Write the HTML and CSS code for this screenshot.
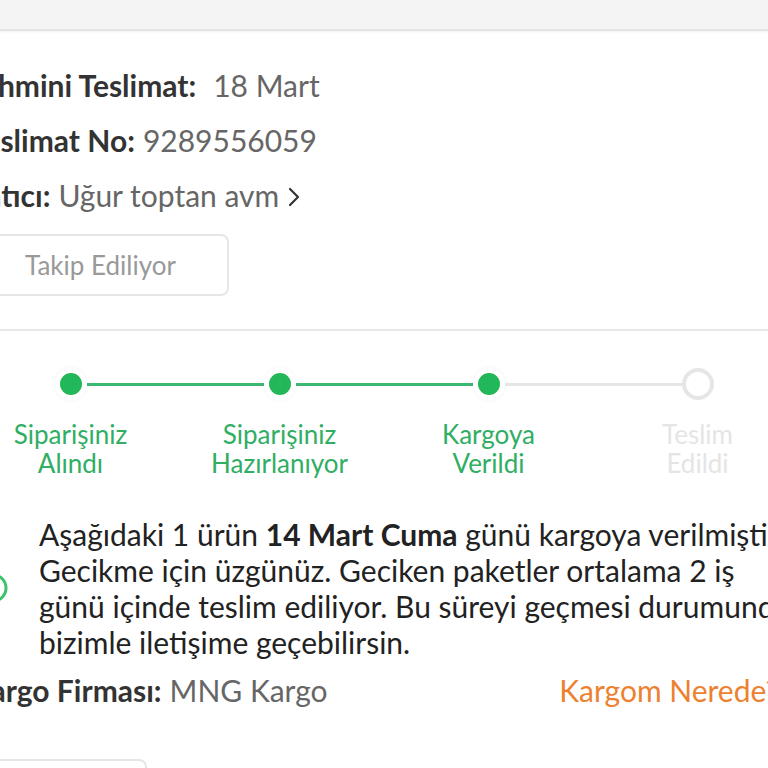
FILE: index.html
```html
<!DOCTYPE html>
<html lang="tr">
<head>
<meta charset="utf-8">
<title>Sipariş Takip</title>
<link rel="stylesheet" href="styles.css">
</head>
<body>
<div class="topbar"></div>
<main class="card">
  <section class="info">
    <div class="row row-first"><span class="label">Tahmini Teslimat:</span><span class="value value-wide">18 Mart</span></div>
    <div class="row"><span class="label">Teslimat No:</span> <span class="value">9289556059</span></div>
    <div class="row"><span class="label">Satıcı:</span> <span class="value">Uğur toptan avm</span><svg class="chev" width="12" height="20" viewBox="0 0 12 20"><path d="M2 2l8 8-8 8" fill="none" stroke="#333" stroke-width="2.2" stroke-linecap="round" stroke-linejoin="round"/></svg></div>
    <button class="track-btn">Takip Ediliyor</button>
  </section>
  <div class="divider"></div>
  <section class="stepper">
    <div class="step done">
      <div class="track"><span class="ln ln-none"></span><span class="dot"></span><span class="ln ln-green"></span></div>
      <div class="step-label">Siparişiniz<br>Alındı</div>
    </div>
    <div class="step done">
      <div class="track"><span class="ln ln-green"></span><span class="dot"></span><span class="ln ln-green"></span></div>
      <div class="step-label">Siparişiniz<br>Hazırlanıyor</div>
    </div>
    <div class="step done">
      <div class="track"><span class="ln ln-green"></span><span class="dot"></span><span class="ln ln-gray"></span></div>
      <div class="step-label">Kargoya<br>Verildi</div>
    </div>
    <div class="step todo">
      <div class="track"><span class="ln ln-gray"></span><span class="dot dot-empty"></span><span class="ln ln-none"></span></div>
      <div class="step-label">Teslim<br>Edildi</div>
    </div>
  </section>
  <section class="message">
    <svg class="msg-icon" width="30" height="30" viewBox="0 0 30 30"><circle cx="15" cy="15" r="13" fill="none" stroke="#3cc26b" stroke-width="3"/><path d="M15 8v7l5 3" fill="none" stroke="#3cc26b" stroke-width="3" stroke-linecap="round"/></svg>
    <p class="msg-text">Aşağıdaki 1 ürün <b>14 Mart Cuma</b> günü kargoya verilmiştir. Gecikme için üzgünüz. Geciken paketler ortalama 2 iş günü içinde teslim ediliyor. Bu süreyi geçmesi durumunda bizimle iletişime geçebilirsin.</p>
  </section>
  <div class="cargo-row">
    <div class="row"><span class="label">Kargo Firması:</span> <span class="value">MNG Kargo</span></div>
    <a class="where">Kargom Nerede?</a>
  </div>
  <div class="bottom-box"></div>
</main>
</body>
</html>
```

FILE: styles.css
```css
html, body {
  margin: 0;
  padding: 0;
  background: #fff;
  overflow: hidden;
}
body {
  font-family: Lato, "Noto Sans", sans-serif;
  color: #333;
}
.topbar {
  height: 29px;
  background: #f4f4f4;
  border-bottom: 2px solid #e4e4e4;
  box-shadow: 0 1px 2px rgba(0,0,0,0.06);
}
.card {
  margin-left: -34px;
  width: 836px;
}
.info {
  padding: 27px 0 0 4px;
}
.row {
  font-size: 30px;
  line-height: 55px;
  white-space: nowrap;
  display: flex;
  align-items: center;
}
.row .label {
  font-weight: 700;
  color: #333;
  margin-right: 8px;
}
.row .value {
  color: #666;
}
.row-first {
  margin-left: -2px;
}
.value-wide {
  margin-left: 9px;
}
.chev {
  margin-left: 9px;
  margin-top: 2px;
}
.track-btn {
  display: block;
  margin: 11px 0 0 2px;
  width: 257px;
  height: 62px;
  border: 2px solid #e6e6e6;
  border-radius: 8px;
  background: #fff;
  font-family: Lato, "Noto Sans", sans-serif;
  font-size: 26px;
  color: #999;
  padding: 0;
}
.divider {
  margin-top: 33px;
  border-top: 2px solid #e8e8e8;
}
.stepper {
  display: grid;
  grid-template-columns: repeat(4, 209px);
  margin-top: 37px;
}
.track {
  display: flex;
  align-items: center;
  height: 32px;
}
.ln {
  flex: 1;
  height: 3px;
}
.ln-green { background: #3cb870; }
.ln-gray { background: #e6e6e6; }
.ln-none { background: transparent; }
.dot {
  width: 22px;
  height: 22px;
  border-radius: 50%;
  background: #22b859;
  border: 5px solid #fff;
  box-shadow: 0 0 4px rgba(0,0,0,0.06);
}
.dot-empty {
  width: 24px;
  height: 24px;
  background: #fff;
  border: 4px solid #e6e6e6;
  box-shadow: none;
}
.step-label {
  margin-top: 20px;
  text-align: center;
  font-size: 26px;
  line-height: 29px;
  color: #2fae64;
}
.todo .step-label {
  color: #e5e5e5;
}
.message {
  display: flex;
  align-items: center;
  margin-top: 38px;
  padding-left: 12px;
}
.msg-icon {
  flex: none;
}
.msg-text {
  margin: 0 0 0 31px;
  width: 758px;
  font-size: 30px;
  line-height: 36px;
  color: #222;
}
.msg-text b {
  font-weight: 700;
}
.cargo-row {
  display: flex;
  justify-content: space-between;
  align-items: center;
  margin-top: 12px;
  padding: 0 23px 0 4px;
}
.cargo-row .row {
  line-height: 36px;
}
.where {
  font-size: 30px;
  line-height: 36px;
  color: #ee8130;
  white-space: nowrap;
}
.bottom-box {
  margin: 51px 0 0 17px;
  width: 160px;
  height: 60px;
  border: 2px solid #e6e6e6;
  border-radius: 8px;
}
```
